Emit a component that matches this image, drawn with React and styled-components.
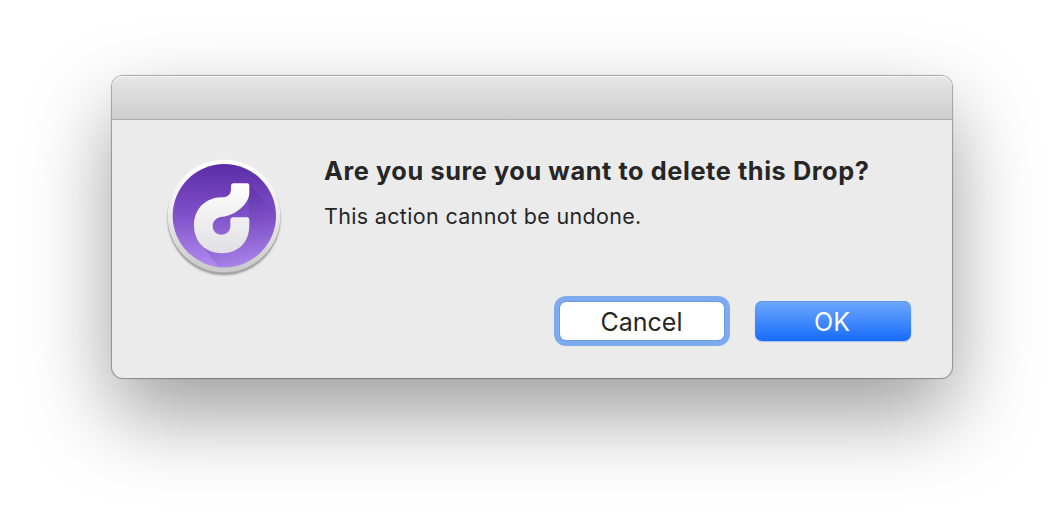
import React from "react";
import styled, { createGlobalStyle } from "styled-components";

const GlobalStyle = createGlobalStyle`
  * {
    box-sizing: border-box;
  }
  body {
    margin: 0;
    background: #fff;
    font-family: Inter, sans-serif;
    color: #262626;
  }
`;

const Screen = styled.main`
  height: 526px;
  padding: 76px 112px 0;
  overflow: hidden;
`;

const Dialog = styled.section`
  width: 840px;
  height: 302px;
  border-radius: 11px;
  background: #ebebeb;
  box-shadow: 0 0 1px 1px rgba(0, 0, 0, 0.32), 0 36px 84px rgba(0, 0, 0, 0.39);
`;

const TitleBar = styled.header`
  height: 44px;
  border-radius: 11px 11px 0 0;
  border-bottom: 1px solid #acacac;
  background: linear-gradient(#e7e7e7, #cdcdcd);
  box-shadow: inset 0 1px 0 #f4f4f4;
`;

const Content = styled.div`
  display: flex;
  padding: 30px 41px 0 48px;
`;

const AppIcon = styled.svg`
  flex: none;
  width: 130px;
  height: 130px;
`;

const Message = styled.div`
  flex: 1;
  padding: 5px 0 0 34px;
  white-space: nowrap;
`;

const Title = styled.h1`
  margin: 0;
  font-size: 25.3px;
  line-height: 32px;
  font-weight: 700;
  letter-spacing: 0.59px;
`;

const Description = styled.p`
  margin: 15px 0 0;
  font-size: 21.5px;
  line-height: 28px;
  letter-spacing: 0.33px;
`;

const Actions = styled.footer`
  display: flex;
  justify-content: flex-end;
  gap: 31px;
  margin-top: 21px;
  padding-right: 41px;
`;

const Button = styled.button`
  width: ${(props) => (props.$primary ? 156 : 164)}px;
  height: ${(props) => (props.$primary ? 40 : 38)}px;
  margin-top: ${(props) => (props.$primary ? 0 : 1)}px;
  padding: ${(props) => (props.$primary ? "2px 2px 0 0" : "2px 1px 0 0")};
  border: 0;
  border-radius: ${(props) => (props.$primary ? 7 : 6)}px;
  outline: none;
  font: 400 25px/36px Inter, sans-serif;
  color: ${(props) => (props.$primary ? "#fff" : "#262626")};
  background: ${(props) => (props.$primary ? "linear-gradient(#6ea8fb, #176bfd)" : "#fff")};
  box-shadow: ${(props) =>
    props.$primary
      ? "inset 0 1px 0 #5d98ee, 0 1px 1px rgba(30, 110, 240, 0.35)"
      : "0 0 0 1px #6b9be1, 0 0 0 6px #7eabef"};
`;

const DropIcon = () => (
  <AppIcon viewBox="0 0 390 390" aria-hidden="true">
    <defs>
      <linearGradient id="rim" x1="0" y1="0" x2="0" y2="1">
        <stop offset="0" stopColor="#fff" />
        <stop offset="0.45" stopColor="#ededed" />
        <stop offset="1" stopColor="#c9c9c9" />
      </linearGradient>
      <linearGradient id="disc" x1="0" y1="0" x2="0" y2="1">
        <stop offset="0" stopColor="#5b2ca5" />
        <stop offset="0.5" stopColor="#8052ca" />
        <stop offset="1" stopColor="#b18cee" />
      </linearGradient>
      <linearGradient id="fold" x1="130" y1="120" x2="320" y2="310" gradientUnits="userSpaceOnUse">
        <stop offset="0.4" stopColor="#46208a" stopOpacity="0.26" />
        <stop offset="1" stopColor="#7444bd" stopOpacity="0.05" />
      </linearGradient>
      <linearGradient id="glyph" x1="0" y1="0" x2="0" y2="1">
        <stop offset="0" stopColor="#fff" />
        <stop offset="1" stopColor="#e0dfe2" />
      </linearGradient>
      <clipPath id="discClip">
        <circle cx="193" cy="197" r="155" />
      </clipPath>
      <filter id="soft">
        <feGaussianBlur stdDeviation="2.5" />
      </filter>
    </defs>
    <circle cx="192" cy="206" r="168" fill="#555" opacity="0.7" filter="url(#soft)" />
    <circle cx="192" cy="202" r="169" fill="#a9a9a9" />
    <circle cx="192" cy="198" r="169" fill="url(#rim)" />
    <circle cx="193" cy="197" r="155" fill="url(#disc)" />
    <g clipPath="url(#discClip)">
      <path fill="url(#fold)" d="M265 102L390 227V390H205L125 285L185 310L267 204Z" />
    </g>
    <path
      fill="url(#glyph)"
      d="M221 100H261Q268 100 268 107V128C268 162 226 196 187 200C170 201 158 213 158 228C158 243 169 254 184 254C200 254 211 243 211 228V211Q211 202 220 202H260Q268 202 268 210V226C268 276 236 310 186 310C136 310 102 275 102 226C102 176 137 143 185 142C205 141 213 132 213 116V108Q213 100 221 100Z"
    />
  </AppIcon>
);

export default function App() {
  return (
    <>
      <GlobalStyle />
      <Screen>
        <Dialog role="alertdialog" aria-labelledby="title" aria-describedby="description">
          <TitleBar />
          <Content>
            <DropIcon />
            <Message>
              <Title id="title">Are you sure you want to delete this Drop?</Title>
              <Description id="description">This action cannot be undone.</Description>
            </Message>
          </Content>
          <Actions>
            <Button>Cancel</Button>
            <Button $primary>OK</Button>
          </Actions>
        </Dialog>
      </Screen>
    </>
  );
}
